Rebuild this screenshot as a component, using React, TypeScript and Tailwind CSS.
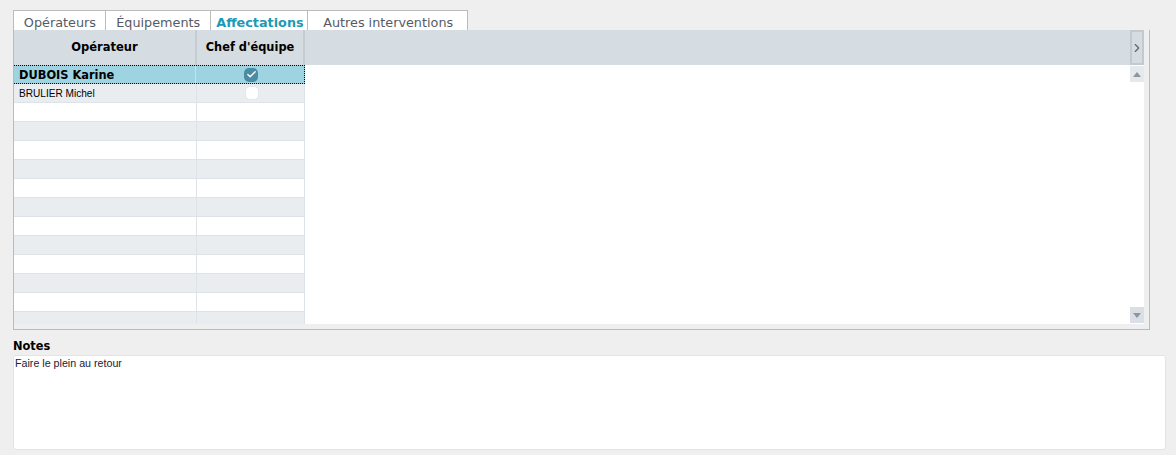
import { Check, ChevronRight } from "lucide-react";

const tabs = [
  { label: "Opérateurs", width: "w-[92px] pl-px" },
  { label: "Équipements", width: "w-[105px] pl-px" },
  { label: "Affectations", width: "w-[98px] pl-[2px]" },
  { label: "Autres interventions", width: "w-[159px] pl-px" },
];

const emptyRows = Array.from({ length: 12 }, (_, i) => i);

function CheckMark({ checked }: { checked: boolean }) {
  return (
    <div
      className={
        checked
          ? "w-[14px] h-[14px] rounded-[5px] bg-[#4b8ba3] flex items-center justify-center"
          : "w-[14px] h-[14px] rounded-[5px] bg-white border border-[#e4e7ea]"
      }
    >
      {checked && <Check size={11} strokeWidth={3} className="text-white" />}
    </div>
  );
}

export default function App() {
  return (
    <div className="w-[1176px] h-[455px] bg-[#efefef] pt-[10px] pl-[13px] pr-[10px] overflow-hidden font-['DejaVu_Sans',sans-serif]">
      {/* Tabs */}
      <div className="flex h-[20px] w-[455px] bg-white border-t border-l border-r border-[#bbbbbb]">
        {tabs.map((tab) => (
          <div
            key={tab.label}
            className={`${tab.width} border-r border-[#bbbbbb] last:border-r-0 text-center text-[12.8px] leading-[23px] ${
              tab.label === "Affectations" ? "font-bold text-[#1c9ab5]" : "text-[#555b66]"
            }`}
          >
            {tab.label}
          </div>
        ))}
      </div>

      {/* Table panel */}
      <div className="w-[1137px] h-[300px] border-l border-r border-b border-[#bbbbbb] pr-[5px] pb-[5px]">
        <div className="flex h-[35px] bg-[#d5dce2]">
          <div className="w-[183px] pt-px border-r-2 border-[#c6ccd2] flex items-center justify-center text-[11.5px] font-bold text-black">
            Opérateur
          </div>
          <div className="w-[108px] pt-px border-r-2 border-[#c6ccd2] flex items-center justify-center text-[11.4px] font-bold text-black">
            Chef d'équipe
          </div>
          <div className="flex-1 flex justify-end">
            <div className="w-[14px] h-full border-2 border-[#c3c9cf] flex items-center justify-center">
              <ChevronRight size={14} strokeWidth={2} className="text-[#5f656a] shrink-0" />
            </div>
          </div>
        </div>

        <div className="flex h-[259px] bg-white">
          <div className="w-[291px] h-full overflow-hidden">
            <div className="flex h-[19px] bg-[#9ed4e2] border-y border-r border-dotted border-black">
              <div className="w-[182px] pl-[5px] text-[11.4px] leading-[19px] font-bold text-black border-r border-[#c4e3ec]">
                DUBOIS Karine
              </div>
              <div className="flex-1 pl-[2px] flex items-center justify-center">
                <CheckMark checked />
              </div>
            </div>
            <div className="flex h-[19px] bg-[#e9edf0] border-b border-[#dde3e8]">
              <div className="w-[183px] pl-[5px] text-[10.1px] leading-[19px] text-black font-['Liberation_Sans',sans-serif] border-r border-[#dde3e8]">
                BRULIER Michel
              </div>
              <div className="flex-1 pl-[2px] flex items-center justify-center border-r border-[#dde3e8]">
                <CheckMark checked={false} />
              </div>
            </div>
            {emptyRows.map((row) => (
              <div
                key={row}
                className={`flex h-[19px] border-b border-[#dde3e8] ${
                  row % 2 === 0 ? "bg-white" : "bg-[#e9edf0]"
                }`}
              >
                <div className="w-[183px] border-r border-[#dde3e8]" />
                <div className="flex-1 border-r border-[#dde3e8]" />
              </div>
            ))}
          </div>

          {/* Scrollbar */}
          <div className="flex-1 flex flex-col items-end justify-between pt-px pb-px">
            <div className="w-[14px] h-[16px] bg-[#e4e9ed] flex items-center justify-center">
              <div className="w-0 h-0 border-x-[4px] border-x-transparent border-b-[5px] border-b-[#909599]" />
            </div>
            <div className="w-[14px] h-[16px] bg-[#d9dfe4] flex items-center justify-center">
              <div className="w-0 h-0 border-x-[4px] border-x-transparent border-t-[5px] border-t-[#909599]" />
            </div>
          </div>
        </div>
      </div>

      {/* Notes */}
      <div className="mt-[9px] text-[11.4px] leading-[14px] font-bold text-black">Notes</div>
      <div className="mt-[2px] w-[1153px] h-[95px] bg-white border border-[#e3e3e3] rounded-[3px] pl-[1px] text-[10.7px] leading-[14px] text-[#222233] font-['Liberation_Sans',sans-serif]">
        Faire le plein au retour
      </div>
    </div>
  );
}
